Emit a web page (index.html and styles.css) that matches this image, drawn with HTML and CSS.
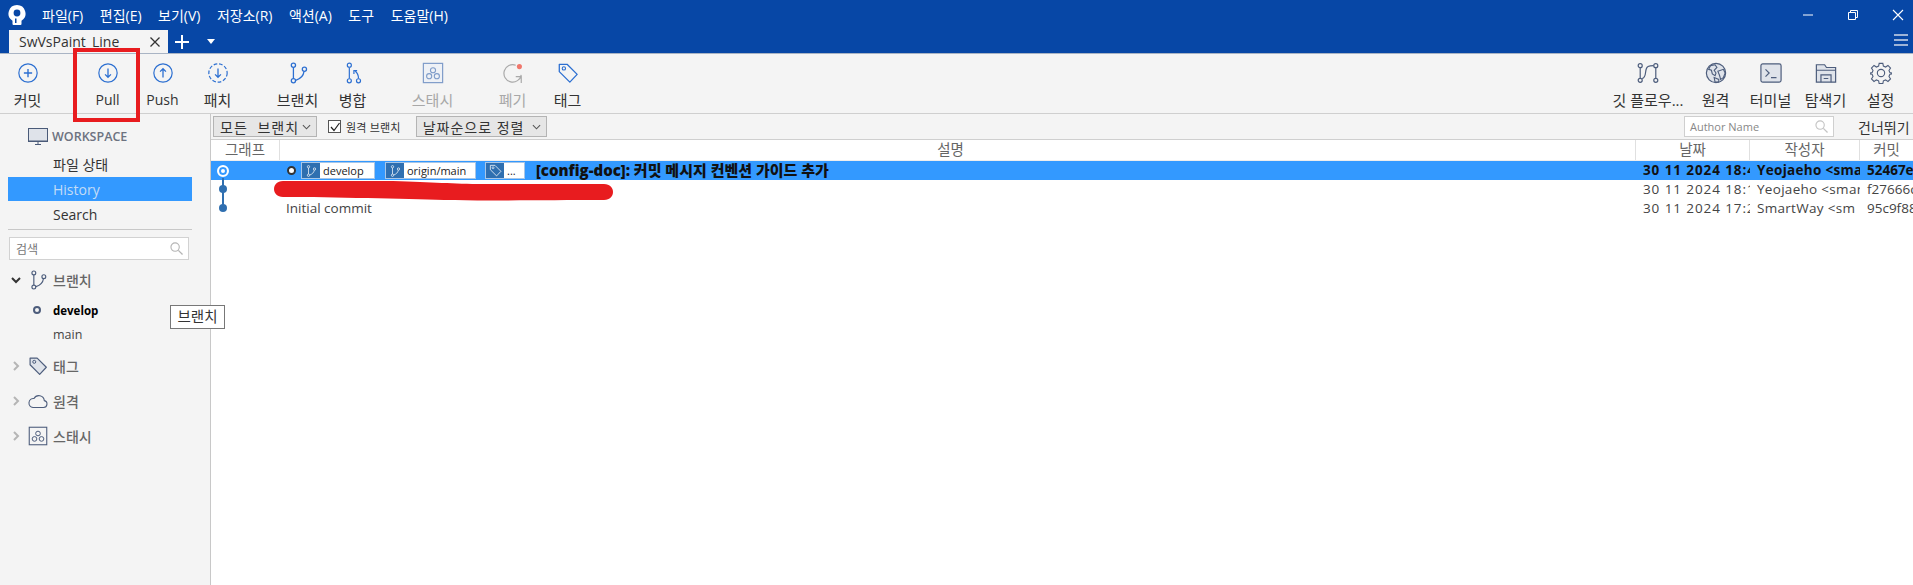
FILE: index.html
```html
<!DOCTYPE html>
<html lang="ko">
<head>
<meta charset="utf-8">
<title>SwVsPaint_Line</title>
<link rel="stylesheet" href="styles.css">
</head>
<body>
<svg class="defs" width="0" height="0" aria-hidden="true">
  <symbol id="i-branch" viewBox="0 0 24 24"><g fill="none" stroke="currentColor" stroke-width="1.4"><circle cx="7" cy="3.5" r="2.3"/><circle cx="7" cy="20.5" r="2.3"/><circle cx="19" cy="8" r="2.3"/><path d="M7 6v12M18.5 10.5c-.5 4.5-4.5 8-9 9.500"/></g></symbol>
  <symbol id="i-tag" viewBox="0 0 24 24"><path fill="var(--tagfill,none)" stroke="currentColor" stroke-width="1.4" stroke-linejoin="round" d="M2.500 2.500h8.500l11 11-8 8.500-11.500-11.500z"/><circle cx="7.500" cy="7" r="1.800" fill="none" stroke="currentColor" stroke-width="1.200"/></symbol>
  <symbol id="i-stash" viewBox="0 0 24 24"><rect x="1.500" y="1.500" width="21" height="21" fill="var(--tagfill,none)" stroke="currentColor" stroke-width="1.300"/><g fill="none" stroke="currentColor" stroke-width="1.200"><circle cx="12" cy="9" r="2.800"/><circle cx="7.800" cy="15.500" r="2.800"/><circle cx="16.200" cy="15.500" r="2.800"/></g></symbol>
</svg>

<div class="app">
  <header class="titlebar">
    <svg class="logo" viewBox="0 0 18 20" width="18" height="20" aria-hidden="true"><path fill="#fff" d="M9 0a8.500 8.500 0 0 1 4.500 15.700V19a1 1 0 0 1-1 1h-7a1 1 0 0 1-1-1v-3.300A8.500 8.500 0 0 1 9 0z"/><circle cx="9" cy="8" r="3.400" fill="#0747a6"/><path fill="#0747a6" d="M7 13.500h1.500V18H7z"/></svg>
    <nav class="menu">
      <span>파일(F)</span><span>편집(E)</span><span>보기(V)</span><span>저장소(R)</span><span>액션(A)</span><span>도구</span><span>도움말(H)</span>
    </nav>
    <div class="winctl">
      <svg viewBox="0 0 12 12" width="12" height="12"><path d="M1 6h10" stroke="#fff" stroke-width="1"/></svg>
      <svg viewBox="0 0 12 12" width="12" height="12"><path d="M1.500 3.500h7v7h-7zM3.500 3.500v-2h7v7h-2" fill="none" stroke="#fff"/></svg>
      <svg viewBox="0 0 12 12" width="12" height="12"><path d="M1 1l10 10M11 1L1 11" stroke="#fff" stroke-width="1.100"/></svg>
    </div>
  </header>
  <div class="tabrow">
    <div class="tab"><span>SwVsPaint_Line</span>
      <svg viewBox="0 0 12 12" width="12" height="12"><path d="M1.500 1.500l9 9M10.500 1.500l-9 9" stroke="#333" stroke-width="1.300"/></svg>
    </div>
    <svg class="plus" viewBox="0 0 14 14" width="14" height="14"><path d="M7 0v14M0 7h14" stroke="#fff" stroke-width="2"/></svg>
    <span class="caret"></span>
    <div class="burger"><i></i><i></i><i></i></div>
  </div>

  <div class="toolbar">
    <div class="tool gap">
      <svg class="ic blue" viewBox="0 0 24 24"><circle cx="12" cy="12" r="10" fill="none" stroke="currentColor" stroke-width="1.300"/><path d="M12 7.500v9M7.500 12h9" stroke="currentColor" stroke-width="1.500"/></svg><span>커밋</span>
    </div>
    <div class="tool latin">
      <svg class="ic blue" viewBox="0 0 24 24"><circle cx="12" cy="12" r="10" fill="none" stroke="currentColor" stroke-width="1.300"/><path d="M12 7v9.500M8.800 13.500l3.200 3.200 3.200-3.200" fill="none" stroke="currentColor" stroke-width="1.400"/></svg><span>Pull</span>
    </div>
    <div class="tool latin">
      <svg class="ic blue" viewBox="0 0 24 24"><circle cx="12" cy="12" r="10" fill="none" stroke="currentColor" stroke-width="1.300"/><path d="M12 17V7.500M8.800 10.500L12 7.300l3.200 3.200" fill="none" stroke="currentColor" stroke-width="1.400"/></svg><span>Push</span>
    </div>
    <div class="tool gap">
      <svg class="ic blue" viewBox="0 0 24 24"><circle cx="12" cy="12" r="10" fill="none" stroke="currentColor" stroke-width="1.300" stroke-dasharray="4 2"/><path d="M12 7v9.500M8.800 13.500l3.200 3.200 3.200-3.200" fill="none" stroke="currentColor" stroke-width="1.400"/></svg><span>패치</span>
    </div>
    <div class="tool">
      <svg class="ic blue"><use href="#i-branch"/></svg><span>브랜치</span>
    </div>
    <div class="tool gap">
      <svg class="ic blue" viewBox="0 0 24 24"><g fill="none" stroke="currentColor" stroke-width="1.300"><circle cx="8" cy="3.500" r="2.200"/><circle cx="8" cy="20.500" r="2.200"/><circle cx="18" cy="20.500" r="2.200"/><path d="M8 6v12M18 18c0-3-1-6-3.500-8M13 13V9.500h3.500"/></g></svg><span>병합</span>
    </div>
    <div class="tool off gap">
      <svg class="ic stashic"><use href="#i-stash"/></svg><span>스태시</span>
    </div>
    <div class="tool off">
      <svg class="ic" viewBox="0 0 24 24"><path d="M15 3.500A9.500 9.500 0 1 0 21 14M21 23v-7h-6" fill="none" stroke="#a9a9a9" stroke-width="1.300"/><circle cx="19" cy="5" r="2.800" fill="#f0776c"/></svg><span>폐기</span>
    </div>
    <div class="tool">
      <svg class="ic blue"><use href="#i-tag"/></svg><span>태그</span>
    </div>
    <div class="tools-right">
      <div class="tool wide">
        <svg class="ic slate" viewBox="0 0 24 24"><g fill="none" stroke="currentColor" stroke-width="1.300"><circle cx="3.500" cy="4" r="2.200"/><circle cx="3.500" cy="20" r="2.200"/><circle cx="20.500" cy="4" r="2.200"/><circle cx="20.500" cy="20" r="2.200"/><path d="M3.500 6.500v11M20.500 6.500v11M5.500 18c6-1 2-11 6.500-13 2-1 4-1 6-1"/></g></svg><span>깃 플로우...</span>
      </div>
      <div class="tool">
        <svg class="ic slate" viewBox="0 0 24 24"><circle cx="12" cy="12" r="10.500" fill="#dfe3ea" stroke="currentColor" stroke-width="1.300"/><path fill="none" stroke="#4d5d7c" stroke-width="1.200" d="M6 4l5-1 2 3-3 3 2 3-1 3-3-2-1-4-3-1zM14 10l6-2 2 4-2 5-3 2-1-4zM10 17l5 2 0 3-4 0z"/></svg><span>원격</span>
      </div>
      <div class="tool">
        <svg class="ic slate" viewBox="0 0 24 24"><rect x="1" y="2" width="22" height="20" rx="2" fill="#dfe3ea" stroke="currentColor" stroke-width="1.300"/><path d="M6 8l4 4-4 4M12 17h6" fill="none" stroke="currentColor" stroke-width="1.300"/></svg><span>터미널</span>
      </div>
      <div class="tool">
        <svg class="ic slate" viewBox="0 0 24 24"><path d="M1.500 3h9l2 3h10v16h-21z" fill="#dfe3ea" stroke="currentColor" stroke-width="1.300"/><path d="M1.500 9h21M6.500 22v-8h11v8M9.500 18h5" fill="none" stroke="currentColor" stroke-width="1.300"/></svg><span>탐색기</span>
      </div>
      <div class="tool">
        <svg class="ic slate" viewBox="0 0 24 24"><g fill="none" stroke="currentColor" stroke-width="1.200"><circle cx="12" cy="12" r="4"/><path d="M10 1.500h4l.6 3 2.400 1 2.600-1.700 2.800 2.800-1.700 2.600 1 2.400 3 .6v.6l-3 .6-1 2.400 1.700 2.600-2.800 2.800-2.600-1.700-2.400 1-.6 3h-4l-.6-3-2.400-1-2.600 1.700-2.800-2.800 1.700-2.600-1-2.400-3-.6v-.6l3-.6 1-2.400L1.600 6.600l2.800-2.800L7 5.500l2.400-1z"/></g></svg><span>설정</span>
      </div>
    </div>
  </div>

  <div class="body">
    <aside class="sidebar">
      <div class="ws-head">
        <svg viewBox="0 0 20 17" width="20" height="17"><rect x=".5" y=".5" width="19" height="12.500" fill="#dfe3ea" stroke="#4a5a78"/><path d="M0 13.500h20M7 16.500h6M10 14v2" stroke="#4a5a78"/></svg>
        <span>WORKSPACE</span>
      </div>
      <div class="ws-item">파일 상태</div>
      <div class="ws-item active">History</div>
      <div class="ws-item">Search</div>
      <div class="side-rule"></div>
      <div class="side-search"><span>검색</span>
        <svg viewBox="0 0 14 14" width="13" height="13"><circle cx="5.500" cy="5.500" r="4.500" fill="none" stroke="#b5b5b5" stroke-width="1.200"/><path d="M9 9l4.500 4.500" stroke="#b5b5b5" stroke-width="1.400"/></svg>
      </div>
      <div class="group first">
        <svg class="chev" viewBox="0 0 10 10" width="10" height="10"><path d="M1 3l4 4 4-4" fill="none" stroke="#333" stroke-width="2"/></svg>
        <svg class="gi slate"><use href="#i-branch"/></svg><span>브랜치</span>
      </div>
      <div class="leaf current"><i class="ring"></i><span>develop</span></div>
      <div class="leaf"><span>main</span></div>
      <div class="group">
        <svg class="chev" viewBox="0 0 10 10" width="10" height="10"><path d="M3 1l4 4-4 4" fill="none" stroke="#b5b5b5" stroke-width="2"/></svg>
        <svg class="gi slate filled"><use href="#i-tag"/></svg><span>태그</span>
      </div>
      <div class="group">
        <svg class="chev" viewBox="0 0 10 10" width="10" height="10"><path d="M3 1l4 4-4 4" fill="none" stroke="#b5b5b5" stroke-width="2"/></svg>
        <svg class="gi slate" viewBox="0 0 20 20"><path d="M5 16.500h10.500a3.500 3.500 0 0 0 .8-6.900A5.500 5.500 0 0 0 6 7.500 4.500 4.500 0 0 0 5 16.500z" fill="none" stroke="currentColor" stroke-width="1.100"/></svg><span>원격</span>
      </div>
      <div class="group">
        <svg class="chev" viewBox="0 0 10 10" width="10" height="10"><path d="M3 1l4 4-4 4" fill="none" stroke="#b5b5b5" stroke-width="2"/></svg>
        <svg class="gi slate"><use href="#i-stash"/></svg><span>스태시</span>
      </div>
    </aside>

    <main class="main">
      <div class="filters">
        <div class="combo c1">모든 브랜치<svg viewBox="0 0 10 6" width="9" height="6"><path d="M1 1l4 4 4-4" fill="none" stroke="#555" stroke-width="1.200"/></svg></div>
        <label class="check"><i><svg viewBox="0 0 12 12" width="12" height="12"><path d="M2 6l3 3.500L10.500 2" fill="none" stroke="#222" stroke-width="1.200"/></svg></i>원격 브랜치</label>
        <div class="combo c2">날짜순으로 정렬<svg viewBox="0 0 10 6" width="9" height="6"><path d="M1 1l4 4 4-4" fill="none" stroke="#555" stroke-width="1.200"/></svg></div>
        <div class="author"><span>Author Name</span><svg viewBox="0 0 14 14" width="13" height="13"><circle cx="5.500" cy="5.500" r="4.500" fill="none" stroke="#c4c4c4" stroke-width="1.200"/><path d="M9 9l4.500 4.500" stroke="#c4c4c4" stroke-width="1.400"/></svg></div>
        <div class="skip">건너뛰기</div>
      </div>
      <div class="row head">
        <div>그래프</div><div class="desc-h">설명</div><div>날짜</div><div>작성자</div><div>커밋</div>
      </div>
      <div class="row sel">
        <div class="graph"><i class="node hollow"></i></div>
        <div class="desc">
          <i class="headdot"></i>
          <span class="ref r1"><b><svg width="12" height="14"><use href="#i-branch"/></svg></b><em>develop</em></span>
          <span class="ref r2"><b><svg width="12" height="14"><use href="#i-branch"/></svg></b><em>origin/main</em></span>
          <span class="ref r3"><b><svg width="13" height="13"><use href="#i-tag"/></svg></b><em>...</em></span>
          <strong>[config-doc]: 커밋 메시지 컨벤션 가이드 추가</strong>
        </div>
        <div class="date">30 11 2024 18:4</div><div class="who">Yeojaeho &lt;sma</div><div>52467e</div>
      </div>
      <div class="row">
        <div class="graph"><i class="node"></i><i class="line up"></i><i class="line down"></i></div>
        <div class="desc"></div>
        <div class="date">30 11 2024 18:1</div><div class="who">Yeojaeho &lt;smar</div><div>f27666c</div>
      </div>
      <div class="row">
        <div class="graph"><i class="node"></i><i class="line up"></i></div>
        <div class="desc plain">Initial commit</div>
        <div class="date">30 11 2024 17:2</div><div class="who">SmartWay &lt;sm</div><div>95c9f88</div>
      </div>
    </main>
  </div>

  <div class="callout"></div>
  <svg class="scribble" viewBox="0 0 339 20" width="339" height="20" aria-hidden="true"><path fill="#e81c1f" d="M9 0h110c40 1 60 3 90 3h121c6 0 9 4 9 8s-3 8-9 8c-60 0-120 1-160 0C130 18 60 16 9 16 3 16 0 12 0 8s3-8 9-8z"/></svg>
  <div class="tooltip">브랜치</div>
</div>
</body>
</html>
```

FILE: styles.css
```css
* { box-sizing: border-box; }
html, body { margin: 0; height: 100%; overflow: hidden; background: #fff; }
body { font-family: "Open Sans", "Noto Sans CJK KR", sans-serif; font-size: 14px; color: #333; }
.defs { position: absolute; }
.app { position: relative; width: 1913px; height: 585px; display: flex; flex-direction: column; overflow: hidden; }
i, em { font-style: normal; }

.titlebar { height: 30px; background: #0747a6; display: flex; align-items: center; color: #fff; padding-left: 8px; }
.logo { flex: none; }
.menu { display: flex; gap: 16.500px; margin-left: 16px; font-size: 14px; }
.winctl { margin-left: auto; display: flex; gap: 33px; padding-right: 9px; }

.tabrow { height: 24px; background: #0747a6; display: flex; align-items: flex-end; padding-left: 9px; border-bottom: 1px solid #a9b4c4; }
.tab { width: 159px; height: 23px; background: #f4f4f4; display: flex; align-items: center; justify-content: space-between; padding: 0 7px 0 10px; font-size: 14px; color: #333; }
.plus { margin: 0 0 4px 7px; }
.caret { margin: 0 0 9px 18px; border: 4px solid transparent; border-top: 5px solid #fff; border-bottom: 0; }
.burger { margin-left: auto; display: flex; flex-direction: column; gap: 3px; width: 14px; margin-right: 5px; padding-bottom: 7px; }
.burger i { height: 2px; background: #9db4d8; }

.toolbar { height: 60px; background: #f4f4f4; border-bottom: 1px solid #cfcfcf; display: flex; }
.tool { width: 55px; flex: none; display: flex; flex-direction: column; align-items: center; padding-top: 8px; font-size: 15px; color: #333; white-space: nowrap; }
.tool > span { margin-top: 6px; line-height: 20px; }
.tool.latin { font-size: 14px; }
.tool.gap { margin-right: 25px; }
.tool.off { color: #a8a8a8; }
.tool.wide { width: 80px; }
.ic { width: 22px; height: 22px; flex: none; }
.blue { color: #2c6fd1; }
.slate { color: #4d5d7c; }
.stashic { color: #7f9cc9; --tagfill: #eef1f6; }
.tools-right { margin-left: auto; display: flex; padding-right: 5px; }

.body { flex: 1; display: flex; min-height: 0; }
.sidebar { width: 211px; flex: none; background: #f4f4f4; border-right: 1px solid #c8c8c8; padding-top: 12px; }
.ws-head { display: flex; align-items: center; gap: 4px; padding-left: 28px; height: 20px; color: #6c7280; font-size: 12.500px; font-weight: 600; }
.ws-item { margin: 0 18px 0 8px; height: 25px; line-height: 25px; padding-left: 45px; color: #333; }
.ws-item:nth-child(2) { margin-top: 6px; }
.ws-item.active { background: #3399ff; color: #c3dcf6; height: 24px; line-height: 25px; margin-bottom: 1px; }
.side-rule { height: 1px; background: #c8c8c8; margin: 2px 18px 7px 8px; }
.side-search { margin: 0 21px 0 9px; height: 23px; background: #fff; border: 1px solid #d2d2d2; display: flex; align-items: center; justify-content: space-between; padding: 0 5px 0 6px; font-size: 12px; color: #777; }
.group { height: 35px; display: flex; align-items: center; padding-left: 11px; color: #666; font-size: 14px; font-weight: 500; }
.group.first { height: 36px; margin-top: 2px; }
.leaf + .group { margin-top: 2px; }
.chev { flex: none; margin-right: 7px; }
.gi { width: 20px; height: 20px; margin-right: 5px; flex: none; }
.filled { --tagfill: #dfe3ea; }
.leaf { height: 24px; padding-left: 53px; display: flex; align-items: center; position: relative; font-size: 12.500px; color: #444; }
.leaf.current { color: #000; font-weight: 700; font-size: 11.500px; }
.ring { position: absolute; left: 33px; top: 8px; width: 8px; height: 8px; border: 2px solid #4d5d7c; border-radius: 50%; }

.main { flex: 1; min-width: 0; display: flex; flex-direction: column; }
.filters { height: 26px; background: #f4f4f4; border-bottom: 1px solid #cfcfcf; display: flex; align-items: center; padding-left: 2px; }
.combo { height: 21px; background: #e6e6e6; border: 1px solid #b4b4b4; display: flex; align-items: center; justify-content: space-between; padding: 0 5px 0 6px; font-size: 14px; letter-spacing: 1px; color: #333; }
.c1 { width: 104px; word-spacing: 5px; }
.c2 { width: 131px; margin-left: 15px; }
.check { display: flex; align-items: center; margin-left: 11px; font-size: 11px; letter-spacing: .2px; gap: 5px; }
.check i { width: 13px; height: 13px; border: 1px solid #555; background: #fff; display: block; line-height: 0; }
.author { margin-left: auto; width: 150px; height: 21px; background: #fff; border: 1px solid #cfcfcf; display: flex; align-items: center; justify-content: space-between; padding: 0 5px; font-size: 11px; color: #888; }
.skip { margin-left: 24px; width: 55px; white-space: nowrap; overflow: hidden; font-size: 14px; }

.row { display: grid; grid-template-columns: 69px 1356px 114px 110px 53px; height: 19px; align-items: center; font-size: 13.500px; color: #444; white-space: nowrap; }
.row > div { overflow: hidden; height: 19px; line-height: 19px; padding: 0 5px 0 7px; }
.row > .graph, .row > .desc { padding: 0; }
.row > .date { letter-spacing: .9px; }
.row > .who { letter-spacing: .3px; }
.row.head { height: 21px; background: #fff; border-bottom: 1px solid #eee; color: #666; font-size: 14.500px; }
.row.head > div { text-align: center; height: 20px; line-height: 20px; padding: 0; border-right: 1px solid #e0e0e0; }
.row.head > div:last-child { border-right: 0; }
.row.head > .desc-h { padding-right: 14px; }
.sel { background: #3399ff; color: #111; font-weight: 700; }
.graph { position: relative; overflow: visible !important; }
.node { position: absolute; left: 8px; top: 5px; width: 8px; height: 8px; border-radius: 50%; background: #2f6fb0; z-index: 1; }
.node.hollow { left: 6px; top: 4px; width: 12px; height: 12px; background: #3399ff; border: 2px solid #fff; box-shadow: inset 0 0 0 2px #3399ff, inset 0 0 0 4px #fff; }
.line { position: absolute; left: 11px; width: 2px; background: #2f6fb0; }
.line.up { top: -2px; height: 9px; }
.line.down { top: 12px; height: 8px; }
.desc { display: flex; align-items: center; }
.plain { padding-left: 6px !important; color: #444; font-size: 13.500px; }
.headdot { width: 9px; height: 9px; margin-left: 7px; border-radius: 50%; background: #fff; border: 2px solid #333; flex: none; }
.ref { height: 17px; display: flex; background: #fff; border: 1px solid #a9c6e6; font-weight: 400; font-size: 11px; margin-left: 5px; }
.ref b { width: 18px; flex: none; background: #2f6fb0; color: #fff; display: flex; align-items: center; justify-content: center; }
.ref em { padding-left: 3px; line-height: 15px; color: #222; overflow: hidden; }
.r1 { width: 74px; }
.r2 { width: 91px; margin-left: 10px; }
.r3 { width: 40px; margin-left: 9px; }
.desc strong { margin-left: 11px; font-size: 15px; color: #111; }

.callout { position: absolute; left: 73px; top: 48px; width: 67px; height: 74px; border: 4px solid #e81c1f; }
.scribble { position: absolute; left: 274px; top: 181px; }
.tooltip { position: absolute; left: 170px; top: 305px; width: 55px; height: 24px; background: #fff; border: 1px solid #777; font-size: 14.500px; line-height: 22px; text-align: center; color: #333; }
```
